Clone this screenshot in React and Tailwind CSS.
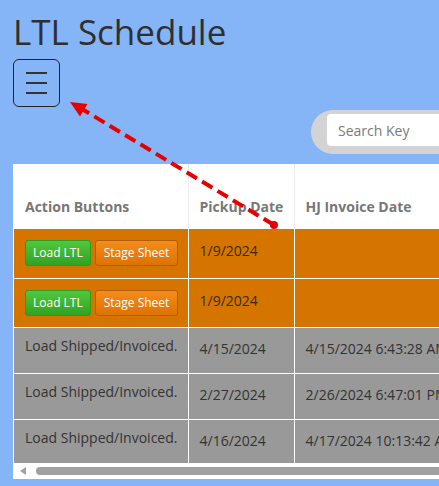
import React from "react";

const font = { fontFamily: '"Open Sans", "Liberation Sans", sans-serif' };

function GreenBtn({ children }) {
  return (
    <button className="h-[26px] px-[7px] rounded-[3px] border border-[#2d9a20] bg-gradient-to-b from-[#52c73e] to-[#2fa321] text-white text-[12px] leading-[24px] whitespace-nowrap">
      {children}
    </button>
  );
}
function OrangeBtn({ children }) {
  return (
    <button className="h-[26px] px-[8px] rounded-[3px] border border-[#b55c00] bg-gradient-to-b from-[#f38d1c] to-[#dd7200] text-white text-[12px] leading-[24px] whitespace-nowrap">
      {children}
    </button>
  );
}

const rows = [
  { kind: "o", pickup: "1/9/2024", inv: "" },
  { kind: "o", pickup: "1/9/2024", inv: "" },
  { kind: "g", pickup: "4/15/2024", inv: "4/15/2024 6:43:28 AM" },
  { kind: "g", pickup: "2/27/2024", inv: "2/26/2024 6:47:01 PM" },
  { kind: "g", pickup: "4/16/2024", inv: "4/17/2024 10:13:42 AM" },
];

export default function App() {
  return (
    <div className="relative w-[439px] h-[486px] overflow-hidden bg-[#85b5f6] pl-[13px]" style={font}>
      <h1 className="pt-[9px] text-[35px] leading-[46px] text-[#2f2f2f] font-normal">LTL Schedule</h1>
      <button className="mt-[4px] w-[47px] h-[48px] border border-[#222] rounded-[6px] flex flex-col items-center justify-center gap-[8px]">
        <span className="block w-[21px] h-[2px] bg-[#333]" />
        <span className="block w-[21px] h-[2px] bg-[#333]" />
        <span className="block w-[21px] h-[2px] bg-[#333]" />
      </button>
      <div className="mt-[3px] flex justify-end">
        <div className="w-[128px] h-[44px] bg-[#d3d3d3] rounded-l-full pl-[16px] py-[4px]">
          <div className="h-[32px] bg-white rounded-l-[4px] pl-[11px] flex items-center text-[14px] text-[#7a7a7a]">
            Search Key
          </div>
        </div>
      </div>
      <div className="mt-[10px] bg-white pl-px overflow-hidden h-[315px]">
        <table className="border-collapse table-fixed w-[560px] text-[14px]">
          <colgroup>
            <col className="w-[174px]" />
            <col className="w-[106px]" />
            <col className="w-[280px]" />
          </colgroup>
          <thead>
            <tr className="h-[65px]">
              <th className="align-bottom text-left font-bold text-[#777] px-[11px] pb-[12px] leading-[20px] whitespace-nowrap border-r border-[#ececec]">Action Buttons</th>
              <th className="align-bottom text-left font-bold text-[#777] px-[11px] pb-[12px] leading-[20px] whitespace-nowrap border-r border-[#ececec]">Pickup Date</th>
              <th className="align-bottom text-left font-bold text-[#777] px-[11px] pb-[12px] leading-[20px] whitespace-nowrap">HJ Invoice Date</th>
            </tr>
          </thead>
          <tbody>
            {rows.map((r, i) =>
              r.kind === "o" ? (
                <tr key={i} className="h-[49px] bg-[#d57500] text-[#3a2a10]">
                  <td className="align-top px-[11px] pt-[11px] border-r border-b border-white">
                    <div className="flex gap-[4px]">
                      <GreenBtn>Load LTL</GreenBtn>
                      <OrangeBtn>Stage Sheet</OrangeBtn>
                    </div>
                  </td>
                  <td className="align-top px-[11px] pt-[12px] leading-[20px] border-r border-b border-white">{r.pickup}</td>
                  <td className="align-top px-[11px] pt-[12px] leading-[20px] border-b border-white">{r.inv}</td>
                </tr>
              ) : (
                <tr key={i} className={`${i === rows.length - 1 ? "h-[44px]" : "h-[46px]"} bg-[#999999] text-[#333]`}>
                  <td className={`align-top px-[11px] pt-[8px] leading-[20px] whitespace-nowrap border-r border-white ${i === rows.length - 1 ? "" : "border-b"}`}>Load Shipped/Invoiced.</td>
                  <td className={`align-top px-[11px] pt-[11px] leading-[20px] border-r border-white ${i === rows.length - 1 ? "" : "border-b"}`}>{r.pickup}</td>
                  <td className={`align-top px-[11px] pt-[11px] leading-[20px] whitespace-nowrap border-white ${i === rows.length - 1 ? "" : "border-b"}`}>{r.inv}</td>
                </tr>
              )
            )}
          </tbody>
        </table>
        <div className="h-[15px] bg-white flex items-center">
          <div className="ml-[6px] w-0 h-0 border-y-[4px] border-y-transparent border-r-[6px] border-r-[#a0a0a0]" />
          <div className="ml-[10px] flex-1 h-[8px] rounded-l-full bg-[#a0a0a0]" />
        </div>
      </div>
      <svg className="absolute inset-0 pointer-events-none" width="439" height="486">
        <line x1="274" y1="225" x2="82" y2="109" stroke="#e60000" strokeWidth="4" strokeDasharray="12 6" />
        <circle cx="274" cy="225" r="4" fill="#e60000" />
        <polygon points="70,102 87.5,104 80,116.5" fill="#e60000" />
      </svg>
    </div>
  );
}
